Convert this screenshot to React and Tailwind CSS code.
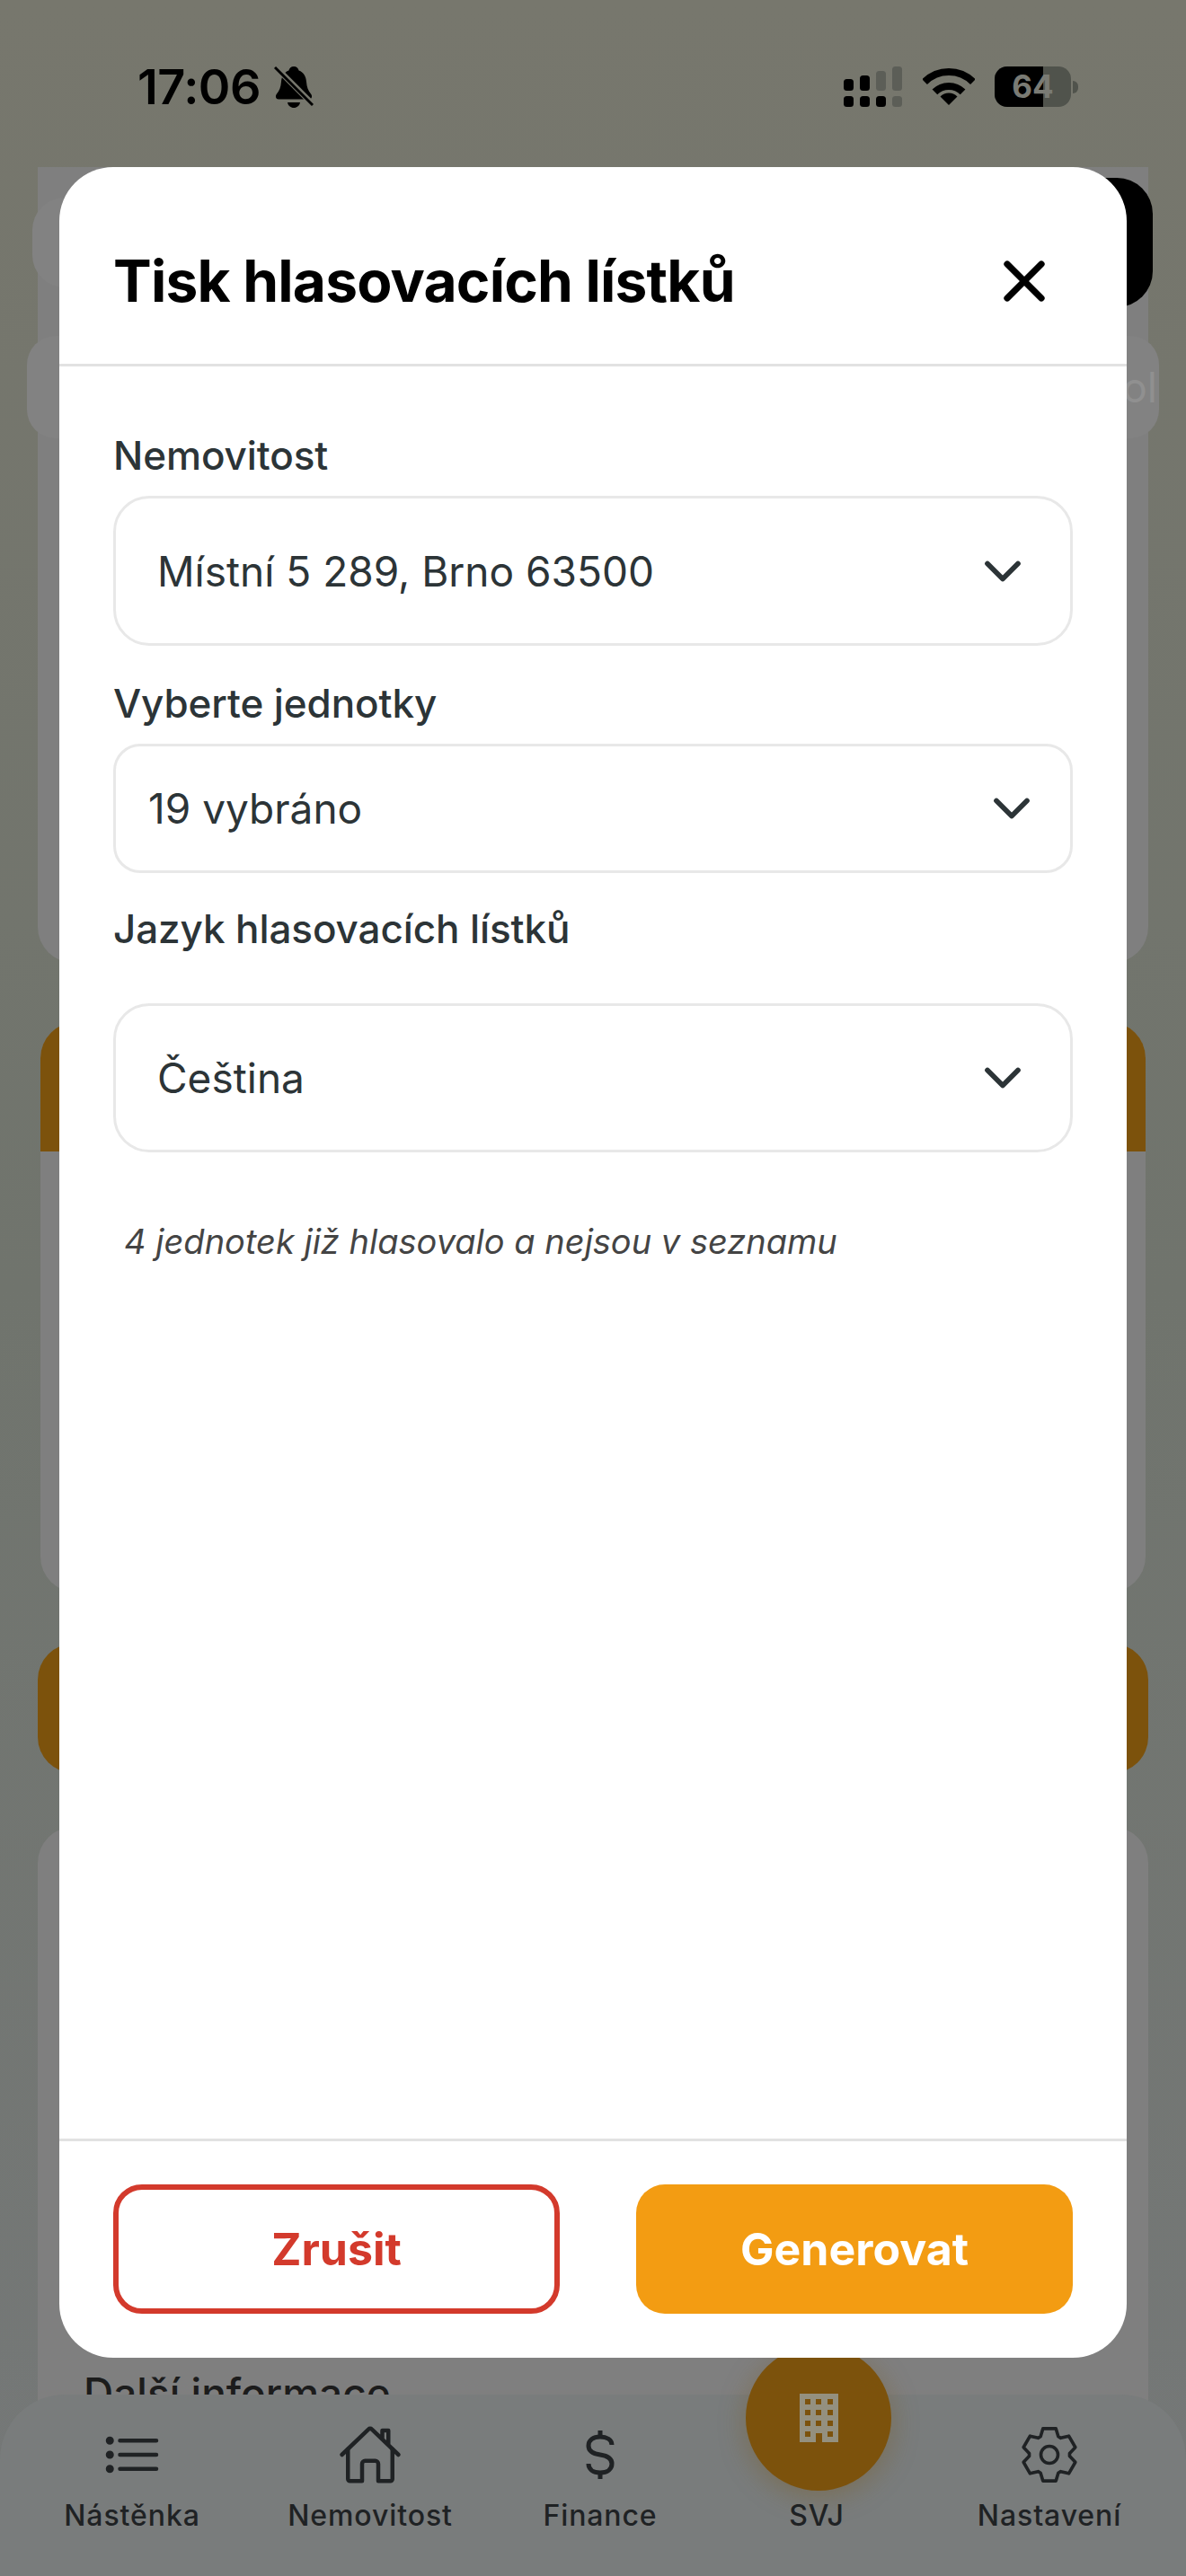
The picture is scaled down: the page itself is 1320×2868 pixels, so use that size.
import React from 'react';
import { ChevronDown, X } from 'lucide-react';
import { IoHomeOutline, IoListOutline } from 'react-icons/io5';

// six-tooth outline for the settings icon
const gearPath = () => {
  const pts = [];
  for (let i = 0; i < 6; i++) {
    const a = (i * 60 - 90) * (Math.PI / 180);
    [[-26, 22.5], [-14, 30], [14, 30], [26, 22.5]].forEach(([deg, r]) => {
      const t = a + (deg * Math.PI) / 180;
      pts.push(`${(32 + r * Math.cos(t)).toFixed(2)} ${(32 + r * Math.sin(t)).toFixed(2)}`);
    });
  }
  return `M${pts.join('L')}Z`;
};

const GearIcon = () => (
  <svg width="64" height="66" viewBox="0 0 64 64" fill="none" stroke="#1f2224" strokeWidth="3.6" strokeLinejoin="round">
    <path d={gearPath()} />
    <circle cx="32" cy="32" r="9.5" />
  </svg>
);

const DollarIcon = () => (
  <svg width="32" height="54" viewBox="0 0 32 54" fill="none" stroke="#1f2224" strokeWidth="5" strokeLinecap="butt">
    <path d="M16 0V7M16 47V54" />
    <path d="M29 16C29 10 23 7 16 7C8 7 3 11 3 17C3 24 9 26 16 27C23 28 29 30 29 37C29 43 24 47 16 47C8 47 3 43 3 37" />
  </svg>
);

const BuildingIcon = () => (
  <svg width="43" height="54" viewBox="0 0 43 54">
    <path fill="#94907f" d="M0 0h43v54H25V44h-7v10H0z" />
    <g fill="#7c520c">
      {[6, 18, 30, 42].map(y =>
        [6, 18, 31].map(x =>
          y === 42 && x === 18 ? null : <rect key={`${x}-${y}`} x={x} y={y} width="6" height="6" />
        )
      )}
    </g>
  </svg>
);

const BellOff = () => (
  <svg width="44" height="48" viewBox="0 0 44 48">
    <path fill="#000" d="M22 1c3 0 5 2 5.600 4.500C33 7.500 35.500 12 36 18c.5 6 2 10 5 13.500 2 2.500 1 6-2 6H5c-3 0-4-3.500-2-6 3-3.500 4.500-7.500 5-13.500.5-6 3-10.500 8.400-12.500C17 3 19 1 22 1z" />
    <path fill="#000" d="M15 41h14c-.5 3.500-3.500 6-7 6s-6.500-2.500-7-6z" />
    <line x1="0" y1="0" x2="44" y2="44" stroke="#77776d" strokeWidth="6.500" />
    <line x1="1" y1="2" x2="43" y2="44" stroke="#000" strokeWidth="3" />
  </svg>
);

const SignalIcon = () => (
  <svg width="66" height="46" viewBox="0 0 66 46">
    <g fill="#000">
      <rect x="0" y="14" width="11" height="13" rx="3.500" />
      <rect x="18" y="10" width="11" height="17" rx="3.500" />
      <rect x="0" y="33" width="11" height="12" rx="3.500" />
      <rect x="18" y="33" width="11" height="12" rx="3.500" />
      <rect x="36" y="33" width="11" height="12" rx="3.500" />
    </g>
    <g fill="#5c5e57">
      <rect x="36" y="5" width="11" height="22" rx="3.500" />
      <rect x="54" y="0" width="11" height="27" rx="3.500" />
      <rect x="54" y="33" width="11" height="12" rx="3.500" />
    </g>
  </svg>
);

const WifiIcon = () => (
  <svg width="58" height="44" viewBox="0 0 58 44" fill="none" stroke="#000" strokeWidth="8">
    <path d="M2.100 17.100A38 38 0 0 1 55.900 17.100" />
    <path d="M13.400 28.400A22 22 0 0 1 44.600 28.400" />
    <path fill="#000" stroke="none" d="M29 43L19.500 33.500A13.500 13.500 0 0 1 38.500 33.500Z" />
  </svg>
);

const navItems = [
  { label: 'Nástěnka', box: 'ml-[67px] w-[160px]', icon: <IoListOutline size={72} color="#1f2224" /> },
  { label: 'Nemovitost', box: 'ml-[90px] w-[190px]', icon: <IoHomeOutline size={72} color="#1f2224" /> },
  { label: 'Finance', box: 'ml-[91px] w-[140px]', icon: <DollarIcon /> },
  { label: 'SVJ', box: 'ml-[121px] w-[100px]', icon: null },
  { label: 'Nastavení', box: 'ml-[124px] w-[170px]', icon: <GearIcon /> },
];

const Field = ({ label, value, labelClass, boxClass }) => (
  <>
    <div className={`text-[44px] font-medium leading-[60px] tracking-[-0.1px] text-[#2c3437] ${labelClass}`}>{label}</div>
    <div className={`flex items-center justify-between border-[3px] border-[#e8e8e8] text-[#2c3437] ${boxClass}`}>
      <span className="text-[46px] leading-[60px]">{value}</span>
      <ChevronDown size={68} strokeWidth={2} color="#2c3437" />
    </div>
  </>
);

const App = () => {
  return (
    <div className="relative h-[2868px] w-[1320px] overflow-hidden bg-gradient-to-b from-[#77776d] via-[#70746d] to-[#757878] font-['Inter',sans-serif]">
      {/* status bar */}
      <div className="flex h-[186px] items-start justify-between pl-[153px] pr-[120px]">
        <div className="mt-[72px] flex items-center gap-[15px]">
          <span className="text-[54px] font-semibold leading-[50px] tracking-[-0.5px] text-black">17:06</span>
          <BellOff />
        </div>
        <div className="mt-[74px] flex items-start gap-[22px]">
          <SignalIcon />
          <WifiIcon />
          <div className="flex items-center gap-[2px]">
            <div className="relative flex h-[45px] w-[85px] items-center justify-center overflow-hidden rounded-[14px] bg-[#50534c]">
              <div className="absolute inset-y-0 left-0 w-[54px] bg-black" />
              <span className="relative text-[35px] font-bold leading-none text-[#7a7b74]">64</span>
            </div>
            <div className="h-[14px] w-[6px] rounded-r-full bg-[#50534c]" />
          </div>
        </div>
      </div>

      {/* dimmed page behind the sheet */}
      <div className="flex flex-col px-[42px]">
        <div className="h-[886px] rounded-b-[40px] bg-[#7f7f7f]">
          <div className="flex h-[188px] items-start justify-between">
            <div className="ml-[-6px] mt-[34px] h-[100px] w-[300px] rounded-[36px] bg-[#828282]" />
            <div className="mr-[-5px] mt-[12px] h-[144px] w-[300px] rounded-[40px] bg-black" />
          </div>
          <div className="mx-[-12px] flex h-[114px] items-center justify-end rounded-[32px] bg-[#828282] pr-[2px]">
            <span className="text-[46px] leading-none text-[#909090]">ol</span>
          </div>
        </div>

        <div className="mx-[3px] mt-[66px] h-[635px] rounded-[40px] bg-[#7f7f7f]">
          <div className="h-[144px] rounded-t-[40px] bg-[#7c520c]" />
        </div>

        <div className="mt-[57px] h-[144px] rounded-[40px] bg-[#7c520c]" />

        <div className="mt-[60px] h-[900px] rounded-t-[40px] bg-[#7f7f7f] pl-[51px] pt-[600px]">
          <span className="text-[46px] font-medium leading-[60px] text-[#1c1c1c]">Další informace</span>
        </div>
      </div>

      {/* bottom tab bar */}
      <div className="absolute inset-x-0 bottom-0 top-[2666px] rounded-t-[72px] bg-[#797c7c]">
        <div className="absolute left-[830px] top-[-55px] flex h-[162px] w-[162px] items-center justify-center rounded-full bg-[#7c520c] pb-[1px] shadow-[0_6px_30px_rgba(124,82,12,0.35)]">
          <BuildingIcon />
        </div>
        <div className="relative flex pt-[30px]">
          {navItems.map(item => (
            <div key={item.label} className={`flex flex-col items-center ${item.box}`}>
              <div className="flex h-[74px] items-center justify-center">{item.icon}</div>
              <span className="mt-[11px] text-[32px] font-medium leading-[40px] tracking-[0.9px] text-[#1f2224]">{item.label}</span>
            </div>
          ))}
        </div>
      </div>

      {/* sheet */}
      <div className="absolute left-[66px] top-[186px] flex h-[2439px] w-[1188px] flex-col rounded-[60px] bg-white">
        <div className="flex h-[222px] items-center justify-between border-b-[3px] border-[#e2e2e2] pl-[60px] pr-[76px] pt-[34px]">
          <h2 className="text-[64px] font-bold leading-none tracking-[-0.8px] text-black">Tisk hlasovacích lístků</h2>
          <X size={76} strokeWidth={2.300} color="#000" />
        </div>

        <div className="flex flex-1 flex-col px-[60px] pt-[69px]">
          <Field
            label="Nemovitost"
            value="Místní 5 289, Brno 63500"
            labelClass="mb-[15px]"
            boxClass="h-[167px] rounded-[40px] pl-[46px] pr-[41px]"
          />
          <Field
            label="Vyberte jednotky"
            value="19 vybráno"
            labelClass="mb-[15px] mt-[34px]"
            boxClass="h-[144px] rounded-[30px] pl-[36px] pr-[31px]"
          />
          <Field
            label="Jazyk hlasovacích lístků"
            value="Čeština"
            labelClass="mb-[53px] mt-[32px]"
            boxClass="h-[166px] rounded-[40px] pl-[46px] pr-[41px]"
          />
          <p className="ml-[12px] mt-[74px] text-[38px] italic leading-[50px] text-[#444444]">4 jednotek již hlasovalo a nejsou v seznamu</p>
        </div>

        <div className="flex h-[244px] items-start justify-between border-t-[3px] border-[#e2e2e2] px-[60px] pt-[48px]">
          <button type="button" className="flex h-[144px] w-[497px] items-center justify-center rounded-[32px] border-[6px] border-[#d33a2c] text-[50px] font-bold text-[#d33a2c]">
            Zrušit
          </button>
          <button type="button" className="flex h-[144px] w-[486px] items-center justify-center rounded-[32px] bg-[#f39c12] text-[50px] font-bold text-white">
            Generovat
          </button>
        </div>
      </div>
    </div>
  );
};

export default App;
